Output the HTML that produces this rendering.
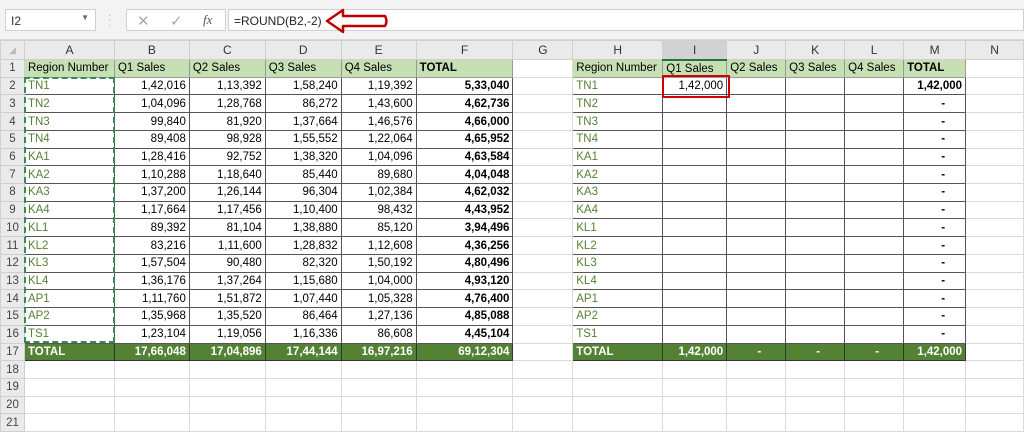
<!DOCTYPE html>
<html><head><meta charset="utf-8"><style>
*{margin:0;padding:0;box-sizing:border-box}
body{width:1024px;height:428px;overflow:hidden;background:#fff;font-family:"Liberation Sans",sans-serif;font-size:11.5px;position:relative}
#top{position:absolute;left:0;top:0;width:1024px;height:40px;background:#f3f3f3;border-bottom:1px solid #d8d8d8}
.nb{position:absolute;left:5px;top:9px;width:91px;height:22px;background:#fff;border:1px solid #d0d0d0;padding:4px 5px;font-size:12px;color:#333}
.fb{position:absolute;left:126px;top:9px;width:100px;height:22px;background:#fff;border:1px solid #d0d0d0}
.fx{position:absolute;left:228px;top:9px;width:796px;height:22px;background:#fff;border:1px solid #d0d0d0;padding:4px 5px;font-size:12px;color:#222}
table{position:absolute;left:0;top:40px;border-collapse:collapse;table-layout:fixed}
td{height:17.73px;border:1px solid #dadada;padding:0 3px;white-space:nowrap;overflow:hidden;line-height:16px}
tr.h td{height:19px;background:#eaeaea;text-align:center;color:#333;border-color:#cfcfcf;font-size:12px}
td.rn{background:#eaeaea;text-align:center;color:#444;border-color:#cfcfcf;padding:0}
.g{background:#c6e0b4;border-color:#999}
.r{text-align:right}
.b{font-weight:bold}
.k{border:1px solid #555}
.reg{color:#548235}
.t{background:#548235;color:#fff;font-weight:bold;border:1px solid #333}
</style></head><body>
<div id="top">
<div class="nb">I2<span style="position:absolute;right:6px;top:3px;font-size:8px;color:#666">▼</span></div>
<div style="position:absolute;left:108px;top:13px;color:#aaa;font-size:10px;line-height:5px">·<br>·<br>·</div>
<div class="fb"><span style="position:absolute;left:10px;top:2px;color:#aaa;font-size:15px">✕</span><span style="position:absolute;left:43px;top:2px;color:#aaa;font-size:15px">✓</span><span style="position:absolute;left:76px;top:2px;color:#555;font-size:13px;font-style:italic;font-family:'Liberation Serif',serif">fx</span></div>
<div class="fx">=ROUND(B2,-2)</div>
<svg style="position:absolute;left:325px;top:8px" width="64" height="26"><path d="M2 13 L18 2 L18 8 L60 8 Q63 13 60 18 L18 18 L18 24 Z" fill="none" stroke="#c00000" stroke-width="2.5" stroke-linejoin="round"/></svg>
</div>
<table>
<colgroup><col style="width:24px"><col style="width:90px"><col style="width:75px"><col style="width:76px"><col style="width:76px"><col style="width:75px"><col style="width:97px"><col style="width:60px"><col style="width:90px"><col style="width:64px"><col style="width:59px"><col style="width:59px"><col style="width:59px"><col style="width:62px"><col style="width:58px"></colgroup>
<tr class="h"><td style="font-size:9px;color:#bbb">◢</td><td>A</td><td>B</td><td>C</td><td>D</td><td>E</td><td>F</td><td>G</td><td>H</td><td style="background:#d2d2d2;border-bottom:2px solid #217346">I</td><td>J</td><td>K</td><td>L</td><td>M</td><td>N</td></tr>
<tr><td class="rn">1</td><td class="g">Region Number</td><td class="g">Q1 Sales</td><td class="g">Q2 Sales</td><td class="g">Q3 Sales</td><td class="g">Q4 Sales</td><td class="g b">TOTAL</td><td></td><td class="g">Region Number</td><td class="g">Q1 Sales</td><td class="g">Q2 Sales</td><td class="g">Q3 Sales</td><td class="g">Q4 Sales</td><td class="g b">TOTAL</td><td></td></tr>
<tr><td class="rn">2</td><td class="k reg">TN1</td><td class="k r">1,42,016</td><td class="k r">1,13,392</td><td class="k r">1,58,240</td><td class="k r">1,19,392</td><td class="k r b">5,33,040</td><td></td><td class="k reg">TN1</td><td class="k r">1,42,000</td><td class="k"></td><td class="k"></td><td class="k"></td><td class="k r b">1,42,000</td><td></td></tr>
<tr><td class="rn">3</td><td class="k reg">TN2</td><td class="k r">1,04,096</td><td class="k r">1,28,768</td><td class="k r">86,272</td><td class="k r">1,43,600</td><td class="k r b">4,62,736</td><td></td><td class="k reg">TN2</td><td class="k"></td><td class="k"></td><td class="k"></td><td class="k"></td><td class="k r b" style="padding-right:20px">-</td><td></td></tr>
<tr><td class="rn">4</td><td class="k reg">TN3</td><td class="k r">99,840</td><td class="k r">81,920</td><td class="k r">1,37,664</td><td class="k r">1,46,576</td><td class="k r b">4,66,000</td><td></td><td class="k reg">TN3</td><td class="k"></td><td class="k"></td><td class="k"></td><td class="k"></td><td class="k r b" style="padding-right:20px">-</td><td></td></tr>
<tr><td class="rn">5</td><td class="k reg">TN4</td><td class="k r">89,408</td><td class="k r">98,928</td><td class="k r">1,55,552</td><td class="k r">1,22,064</td><td class="k r b">4,65,952</td><td></td><td class="k reg">TN4</td><td class="k"></td><td class="k"></td><td class="k"></td><td class="k"></td><td class="k r b" style="padding-right:20px">-</td><td></td></tr>
<tr><td class="rn">6</td><td class="k reg">KA1</td><td class="k r">1,28,416</td><td class="k r">92,752</td><td class="k r">1,38,320</td><td class="k r">1,04,096</td><td class="k r b">4,63,584</td><td></td><td class="k reg">KA1</td><td class="k"></td><td class="k"></td><td class="k"></td><td class="k"></td><td class="k r b" style="padding-right:20px">-</td><td></td></tr>
<tr><td class="rn">7</td><td class="k reg">KA2</td><td class="k r">1,10,288</td><td class="k r">1,18,640</td><td class="k r">85,440</td><td class="k r">89,680</td><td class="k r b">4,04,048</td><td></td><td class="k reg">KA2</td><td class="k"></td><td class="k"></td><td class="k"></td><td class="k"></td><td class="k r b" style="padding-right:20px">-</td><td></td></tr>
<tr><td class="rn">8</td><td class="k reg">KA3</td><td class="k r">1,37,200</td><td class="k r">1,26,144</td><td class="k r">96,304</td><td class="k r">1,02,384</td><td class="k r b">4,62,032</td><td></td><td class="k reg">KA3</td><td class="k"></td><td class="k"></td><td class="k"></td><td class="k"></td><td class="k r b" style="padding-right:20px">-</td><td></td></tr>
<tr><td class="rn">9</td><td class="k reg">KA4</td><td class="k r">1,17,664</td><td class="k r">1,17,456</td><td class="k r">1,10,400</td><td class="k r">98,432</td><td class="k r b">4,43,952</td><td></td><td class="k reg">KA4</td><td class="k"></td><td class="k"></td><td class="k"></td><td class="k"></td><td class="k r b" style="padding-right:20px">-</td><td></td></tr>
<tr><td class="rn">10</td><td class="k reg">KL1</td><td class="k r">89,392</td><td class="k r">81,104</td><td class="k r">1,38,880</td><td class="k r">85,120</td><td class="k r b">3,94,496</td><td></td><td class="k reg">KL1</td><td class="k"></td><td class="k"></td><td class="k"></td><td class="k"></td><td class="k r b" style="padding-right:20px">-</td><td></td></tr>
<tr><td class="rn">11</td><td class="k reg">KL2</td><td class="k r">83,216</td><td class="k r">1,11,600</td><td class="k r">1,28,832</td><td class="k r">1,12,608</td><td class="k r b">4,36,256</td><td></td><td class="k reg">KL2</td><td class="k"></td><td class="k"></td><td class="k"></td><td class="k"></td><td class="k r b" style="padding-right:20px">-</td><td></td></tr>
<tr><td class="rn">12</td><td class="k reg">KL3</td><td class="k r">1,57,504</td><td class="k r">90,480</td><td class="k r">82,320</td><td class="k r">1,50,192</td><td class="k r b">4,80,496</td><td></td><td class="k reg">KL3</td><td class="k"></td><td class="k"></td><td class="k"></td><td class="k"></td><td class="k r b" style="padding-right:20px">-</td><td></td></tr>
<tr><td class="rn">13</td><td class="k reg">KL4</td><td class="k r">1,36,176</td><td class="k r">1,37,264</td><td class="k r">1,15,680</td><td class="k r">1,04,000</td><td class="k r b">4,93,120</td><td></td><td class="k reg">KL4</td><td class="k"></td><td class="k"></td><td class="k"></td><td class="k"></td><td class="k r b" style="padding-right:20px">-</td><td></td></tr>
<tr><td class="rn">14</td><td class="k reg">AP1</td><td class="k r">1,11,760</td><td class="k r">1,51,872</td><td class="k r">1,07,440</td><td class="k r">1,05,328</td><td class="k r b">4,76,400</td><td></td><td class="k reg">AP1</td><td class="k"></td><td class="k"></td><td class="k"></td><td class="k"></td><td class="k r b" style="padding-right:20px">-</td><td></td></tr>
<tr><td class="rn">15</td><td class="k reg">AP2</td><td class="k r">1,35,968</td><td class="k r">1,35,520</td><td class="k r">86,464</td><td class="k r">1,27,136</td><td class="k r b">4,85,088</td><td></td><td class="k reg">AP2</td><td class="k"></td><td class="k"></td><td class="k"></td><td class="k"></td><td class="k r b" style="padding-right:20px">-</td><td></td></tr>
<tr><td class="rn">16</td><td class="k reg">TS1</td><td class="k r">1,23,104</td><td class="k r">1,19,056</td><td class="k r">1,16,336</td><td class="k r">86,608</td><td class="k r b">4,45,104</td><td></td><td class="k reg">TS1</td><td class="k"></td><td class="k"></td><td class="k"></td><td class="k"></td><td class="k r b" style="padding-right:20px">-</td><td></td></tr>
<tr><td class="rn">17</td><td class="t">TOTAL</td><td class="t r">17,66,048</td><td class="t r">17,04,896</td><td class="t r">17,44,144</td><td class="t r">16,97,216</td><td class="t r">69,12,304</td><td></td><td class="t">TOTAL</td><td class="t r">1,42,000</td><td class="t r" style="padding-right:24px">-</td><td class="t r" style="padding-right:24px">-</td><td class="t r" style="padding-right:24px">-</td><td class="t r">1,42,000</td><td></td></tr>
<tr><td class="rn">18</td><td></td><td></td><td></td><td></td><td></td><td></td><td></td><td></td><td></td><td></td><td></td><td></td><td></td><td></td></tr>
<tr><td class="rn">19</td><td></td><td></td><td></td><td></td><td></td><td></td><td></td><td></td><td></td><td></td><td></td><td></td><td></td><td></td></tr>
<tr><td class="rn">20</td><td></td><td></td><td></td><td></td><td></td><td></td><td></td><td></td><td></td><td></td><td></td><td></td><td></td><td></td></tr>
<tr><td class="rn">21</td><td></td><td></td><td></td><td></td><td></td><td></td><td></td><td></td><td></td><td></td><td></td><td></td><td></td><td></td></tr>
</table>
<div style="position:absolute;left:24px;top:77px;width:91px;height:266px;border:2px dashed #3a8a55"></div>
<div style="position:absolute;left:662px;top:75px;width:68px;height:23px;border:2px solid #d00000"></div>
</body></html>
